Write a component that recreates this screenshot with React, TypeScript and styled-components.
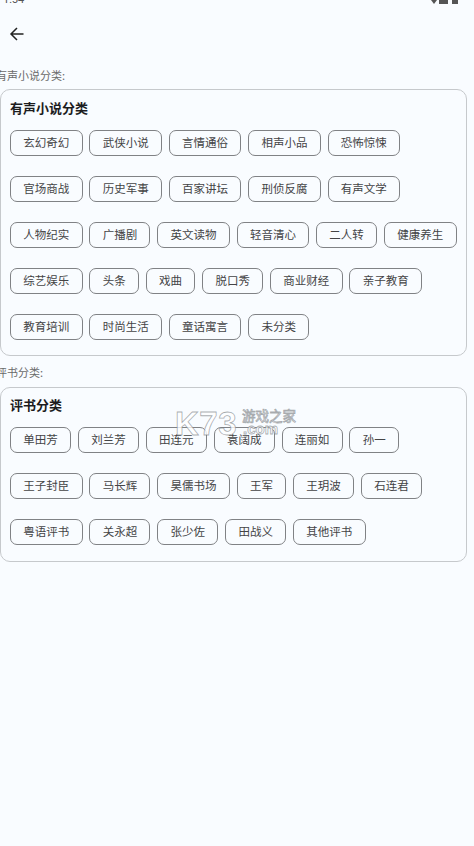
import styled, { createGlobalStyle } from "styled-components";

const GlobalStyle = createGlobalStyle`
  html, body {
    margin: 0;
    padding: 0;
    background: #f9fcff;
  }
`;

const Page = styled.div`
  position: relative;
  width: 474px;
  height: 846px;
  overflow: hidden;
  background: #f9fcff;
  font-family: "Noto Sans CJK SC", "Liberation Sans", sans-serif;
`;

const StatusBar = styled.div`
  display: flex;
  justify-content: space-between;
  align-items: flex-end;
  height: 5px;
  padding: 0 15px 0 3px;
  overflow: hidden;
`;

const Clock = styled.span`
  font-family: "Roboto", sans-serif;
  font-size: 11px;
  line-height: 11px;
  color: #555;
`;

const StatusIcons = styled.svg`
  display: block;
`;

const TopBar = styled.div`
  display: flex;
  align-items: center;
  height: 58px;
  padding-left: 9px;
`;

const BackIcon = styled.svg`
  display: block;
`;

const SectionLabel = styled.div<{ $top: number; $bottom: number }>`
  margin: ${(p) => p.$top}px 0 ${(p) => p.$bottom}px -4px;
  font-size: 11px;
  line-height: 17px;
  color: #6a6a6a;
`;

const Card = styled.section`
  box-sizing: border-box;
  width: 466.5px;
  padding: 7.5px 6px 15.5px 9px;
  border: 1px solid #c6c9cc;
  border-radius: 10px;
`;

const CardTitle = styled.h2`
  margin: 0 0 13px;
  font-size: 13px;
  font-weight: 700;
  line-height: 19px;
  color: #1c1c1e;
`;

const ChipList = styled.div`
  display: flex;
  flex-wrap: wrap;
  gap: 20px 6.8px;
`;

const Chip = styled.span`
  box-sizing: border-box;
  display: flex;
  align-items: center;
  height: 26px;
  padding: 0 12.3px;
  border: 1px solid #808285;
  border-radius: 7px;
  font-size: 11.5px;
  line-height: 1;
  color: #444446;
`;

const Watermark = styled.div`
  position: absolute;
  left: 175px;
  top: 407px;
  display: flex;
  align-items: flex-start;
  color: rgba(255, 255, 255, 0.8);
  -webkit-text-stroke: 0.8px rgba(110, 115, 120, 0.6);
  pointer-events: none;
`;

const WatermarkLogo = styled.span`
  font-family: "Liberation Sans", sans-serif;
  font-size: 33px;
  font-weight: 700;
  line-height: 33px;
  letter-spacing: 0.5px;
`;

const WatermarkSide = styled.div`
  display: flex;
  flex-direction: column;
  align-items: flex-end;
  margin: 0 0 0 5px;
`;

const WatermarkName = styled.span`
  font-size: 13.5px;
  line-height: 16px;
`;

const WatermarkDomain = styled.span`
  margin-right: 18px;
  font-family: "Liberation Sans", sans-serif;
  font-size: 15px;
  font-weight: 700;
  line-height: 12px;
`;

const novels = [
  "玄幻奇幻", "武侠小说", "言情通俗", "相声小品", "恐怖惊悚",
  "官场商战", "历史军事", "百家讲坛", "刑侦反腐", "有声文学",
  "人物纪实", "广播剧", "英文读物", "轻音清心", "二人转", "健康养生",
  "综艺娱乐", "头条", "戏曲", "脱口秀", "商业财经", "亲子教育",
  "教育培训", "时尚生活", "童话寓言", "未分类",
];

const storytelling = [
  "单田芳", "刘兰芳", "田连元", "袁阔成", "连丽如", "孙一",
  "王子封臣", "马长辉", "昊儒书场", "王军", "王玥波", "石连君",
  "粤语评书", "关永超", "张少佐", "田战义", "其他评书",
];

const App = () => {
  return (
    <Page>
      <GlobalStyle />
      <StatusBar>
        <Clock>1:54</Clock>
        <StatusIcons width="36" height="5" viewBox="0 0 36 5">
          <path d="M8 0h6L11 4z" fill="#555" />
          <path d="M16 0h9v4h-9z" fill="#555" />
          <path d="M29 0h6v4h-6z" fill="#555" />
        </StatusIcons>
      </StatusBar>
      <TopBar>
        <BackIcon width="16" height="16" viewBox="0 0 16 16" fill="none" stroke="#222" strokeWidth="1.5">
          <path d="M14.5 8H2M8 2 2 8l6 6" />
        </BackIcon>
      </TopBar>
      <SectionLabel $top={4} $bottom={5.3}>有声小说分类:</SectionLabel>
      <Card>
        <CardTitle>有声小说分类</CardTitle>
        <ChipList>
          {novels.map((name) => (
            <Chip key={name}>{name}</Chip>
          ))}
        </ChipList>
      </Card>
      <SectionLabel $top={7.4} $bottom={6}>评书分类:</SectionLabel>
      <Card>
        <CardTitle>评书分类</CardTitle>
        <ChipList>
          {storytelling.map((name) => (
            <Chip key={name}>{name}</Chip>
          ))}
        </ChipList>
      </Card>
      <Watermark>
        <WatermarkLogo>K73</WatermarkLogo>
        <WatermarkSide>
          <WatermarkName>游戏之家</WatermarkName>
          <WatermarkDomain>.com</WatermarkDomain>
        </WatermarkSide>
      </Watermark>
    </Page>
  );
};

export default App;
